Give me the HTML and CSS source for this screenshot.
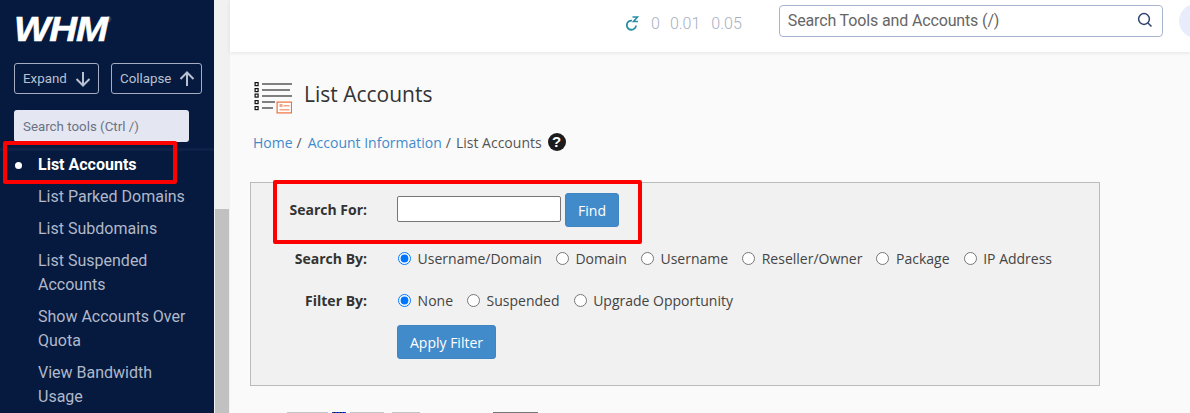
FILE: index.html
```html
<!DOCTYPE html>
<html lang="en">
<head>
<meta charset="utf-8">
<title>List Accounts</title>
<link rel="stylesheet" href="styles.css">
</head>
<body>
<div class="app">
  <aside class="sidebar">
    <div class="logo"><span class="logo-text">WHM</span><span class="logo-reg">®</span></div>
    <div class="tree-btns">
      <button class="tree-btn tree-expand">Expand
        <svg width="16" height="16" viewBox="0 0 16 16"><path d="M8 1V14.5M1.5 8L8 14.5L14.5 8" fill="none" stroke="currentColor" stroke-width="2"/></svg>
      </button>
      <button class="tree-btn tree-collapse">Collapse
        <svg width="16" height="16" viewBox="0 0 16 16"><path d="M8 15V1.5M1.5 8L8 1.5L14.5 8" fill="none" stroke="currentColor" stroke-width="2"/></svg>
      </button>
    </div>
    <input class="tool-search" type="text" placeholder="Search tools (Ctrl /)">
    <ul class="nav">
      <li class="nav-item active">List Accounts</li>
      <li class="nav-item">List Parked Domains</li>
      <li class="nav-item">List Subdomains</li>
      <li class="nav-item">List Suspended Accounts</li>
      <li class="nav-item">Show Accounts Over Quota</li>
      <li class="nav-item">View Bandwidth Usage</li>
    </ul>
  </aside>
  <div class="scroll-track"><div class="scroll-thumb"></div></div>
  <div class="main">
    <header class="topbar">
      <svg class="sleep-icon" width="14" height="16" viewBox="0 0 14 16"><path d="M7 4.6A4.6 4.6 0 1 0 11 9.5" fill="none" stroke="#2a8ea3" stroke-width="1.8"/><path d="M7.5 1H12.5L8.5 5.5H13" fill="none" stroke="#2a8ea3" stroke-width="1.6"/></svg>
      <span class="load l1">0</span><span class="load l2">0.01</span><span class="load l3">0.05</span>
      <div class="global-search">
        <input class="global-input" type="text" placeholder="Search Tools and Accounts (/)">
        <svg class="global-icon" width="16" height="16" viewBox="0 0 16 16"><circle cx="7" cy="7" r="5.4" fill="none" stroke="#2f4270" stroke-width="1.5"/><path d="M11 11L14.5 14.5" stroke="#2f4270" stroke-width="1.5"/></svg>
      </div>
      <div class="avatar"></div>
    </header>
    <main class="content">
      <div class="title-row">
        <svg class="title-icon" width="38" height="36" viewBox="0 0 38 36">
          <g fill="none" stroke="#111" stroke-width="1.2"><rect x="1.1" y="0.6" width="3" height="3"/><rect x="1.1" y="6.6" width="3" height="3"/><rect x="1.1" y="12.1" width="3" height="3"/><rect x="1.1" y="18.6" width="3" height="3"/><rect x="1.1" y="24.6" width="3" height="3"/></g>
          <g fill="#808080"><rect x="8" y="1" width="30" height="2"/><rect x="8" y="7" width="28" height="2"/><rect x="8" y="13" width="31" height="2"/><rect x="8" y="19" width="13" height="2"/><rect x="8" y="25" width="11" height="2"/></g>
          <rect x="23.1" y="20.1" width="14.4" height="10.8" fill="#fff" stroke="#f0703c" stroke-width="1.2"/>
          <g fill="#f5a582"><rect x="25.5" y="22" width="3" height="3"/><rect x="29.5" y="23" width="6" height="1.5"/><rect x="25.5" y="27" width="10" height="1.5"/></g>
        </svg>
        <h1 class="title">List Accounts</h1>
      </div>
      <nav class="crumbs">
        <a class="crumb-link">Home</a><span class="crumb-sep">/</span>
        <a class="crumb-link">Account Information</a><span class="crumb-sep">/</span>
        <span class="crumb-current">List Accounts</span>
        <span class="help">?</span>
      </nav>
      <section class="panel">
        <div class="row row-search">
          <label class="row-label">Search For:</label>
          <input class="find-input" type="text">
          <button class="btn find-btn">Find</button>
        </div>
        <div class="row row-by">
          <span class="row-label">Search By:</span>
          <label class="opt"><input type="radio" name="by" checked>Username/Domain</label>
          <label class="opt"><input type="radio" name="by">Domain</label>
          <label class="opt"><input type="radio" name="by">Username</label>
          <label class="opt"><input type="radio" name="by">Reseller/Owner</label>
          <label class="opt"><input type="radio" name="by">Package</label>
          <label class="opt"><input type="radio" name="by">IP Address</label>
        </div>
        <div class="row row-filter">
          <span class="row-label">Filter By:</span>
          <label class="opt"><input type="radio" name="filter" checked>None</label>
          <label class="opt"><input type="radio" name="filter">Suspended</label>
          <label class="opt"><input type="radio" name="filter">Upgrade Opportunity</label>
        </div>
        <div class="row row-apply">
          <button class="btn apply-btn">Apply Filter</button>
        </div>
      </section>
      <div class="pager">
        <span class="pg pg-a"></span><span class="pg pg-blue"></span><span class="pg pg-b"></span><span class="pg pg-c"></span><span class="pg pg-d"></span>
      </div>
    </main>
  </div>
</div>
<div class="mark mark-nav"></div>
<div class="mark mark-search"></div>
</body>
</html>
```

FILE: styles.css
```css
* { box-sizing: border-box; }
html, body { margin: 0; height: 413px; overflow: hidden; }
body { font-family: "Open Sans", sans-serif; font-size: 14px; color: #333; background: #fafafa; position: relative; }
.app { display: grid; grid-template-columns: 214px 16px 1fr; height: 413px; overflow: hidden; }

/* sidebar */
.sidebar { background: #051a3e; font-family: Roboto, sans-serif; overflow: hidden; padding-top: 14px; }
.logo { display: flex; height: 28px; margin-left: 14px; color: #fff; align-items: flex-start; }
.logo-text { font-family: "Liberation Sans", sans-serif; font-weight: 700; font-style: italic; font-size: 35px; line-height: 30px; width: 92px; display: block; transform: scaleX(1.1); transform-origin: left center; letter-spacing: -1px; -webkit-text-stroke: .6px #fff; }
.logo-reg { font-family: "Liberation Sans", sans-serif; font-size: 7px; line-height: 8px; color: #8e98ad; margin-left: 0; margin-top: 2px; }
.tree-btns { display: flex; gap: 12px; margin: 21px 0 0 14px; }
.tree-btn { display: flex; align-items: center; justify-content: space-between; height: 31px; padding: 0 6px 0 8px; background: transparent; border: 1px solid #a5adc2; border-radius: 3px; color: #b9c0d1; font-family: Roboto, sans-serif; font-size: 13.33px; }
.tree-expand { width: 85px; padding-right: 7px; }
.tree-collapse { width: 91px; }
.tool-search { display: block; width: 175px; height: 32px; margin: 16px 0 0 14px; padding: 0 9px; background: #e4e7f1; border: 0; border-radius: 3px; font-family: Roboto, sans-serif; font-size: 13.33px; }
.tool-search::placeholder { color: #6b7285; opacity: 1; }
.nav { list-style: none; margin: 6px 0 0; padding: 0; border-top: 3px solid #0e2249; }
.nav-item { padding: 2px 24px 4px 38px; line-height: 24px; font-size: 16px; color: #b1b8ca; position: relative; }
.nav-item + .nav-item { padding-top: 4px; padding-bottom: 4px; }
.active { color: #fff; font-weight: 700; }
.active::before { content: ""; position: absolute; left: 15px; top: 11px; width: 7px; height: 7px; border-radius: 50%; background: #fff; }

/* scrollbar */
.scroll-track { background: #f1f1f1; padding: 209px 1px 0; }
.scroll-thumb { height: 100%; background: #c1c1c1; }

/* main */
.main { min-width: 0; display: flex; flex-direction: column; }
.topbar { height: 52px; flex: none; background: #fff; box-shadow: 0 1px 4px rgba(0, 0, 0, .09); display: flex; align-items: flex-start; padding: 5px 0 0 395px; font-family: Roboto, sans-serif; position: relative; }
.sleep-icon { margin-top: 11px; margin-right: 12px; flex: none; }
.load { font-weight: 300; font-size: 16px; color: #a9afc2; line-height: 20px; margin-top: 9px; }
.l1 { margin-left: 0; }
.l2 { margin-left: 10px; }
.l3 { margin-left: 11px; }
.global-search { width: 384px; height: 32px; margin-left: 37px; border: 1px solid #a9b4cf; border-radius: 4px; display: flex; align-items: center; padding: 0 9px 0 8px; flex: none; }
.global-input { flex: 1; min-width: 0; border: 0; padding: 0; margin-bottom: 2px; outline: 0; font-family: Roboto, sans-serif; font-size: 16px; letter-spacing: -.14px; background: transparent; }
.global-input::placeholder { color: #666; opacity: 1; }
.global-icon { margin-bottom: 2px; }
.avatar { width: 34px; height: 34px; border-radius: 50%; background: #e9ecfa; margin-left: 16px; margin-top: -1px; flex: none; }

.content { padding: 30px 0 0 20px; flex: 1; overflow: hidden; }
.title-row { display: flex; align-items: center; height: 36px; padding-left: 4px; }
.title-icon { flex: none; }
.title { font-size: 21px; font-weight: 400; line-height: 30px; margin: 0 0 12px 12px; color: #333; }
.crumbs { display: flex; align-items: center; margin: 12px 0 0 3px; height: 24px; }
.crumb-link { color: #428bca; }
.crumb-sep { margin: 0 6px 0 4px; color: #555; }
.crumb-current { color: #555; margin-left: -1px; }
.help { display: block; width: 18px; height: 18px; margin-left: 6px; border-radius: 50%; background: #1c1c1c; color: #fff; font-family: "Liberation Sans", sans-serif; font-weight: 700; font-size: 15px; line-height: 18px; text-align: center; }

.panel { width: 850px; height: 204px; margin-top: 28px; background: #f1f1f1; border: 1px solid #bbb; display: flex; flex-direction: column; }
.row { display: flex; align-items: center; }
.row-label { width: 116px; margin-right: 30px; text-align: right; font-weight: 700; color: #333; flex: none; }
.row-search { margin-top: 10px; height: 34px; }
.row-search .row-label { margin-bottom: 2px; }
.row-by { margin-top: 21px; height: 20px; }
.row-filter { margin-top: 22px; height: 20px; }
.row-apply { margin-top: 15px; padding-left: 146px; }
.find-input { width: 164px; height: 26px; border: 1px solid #767676; border-radius: 2px; background: #fff; margin: 0 4px 2px 0; padding: 0; }
.btn { background: #428bca; border: 1px solid #3f85c2; border-radius: 3px; color: #fff; font-family: "Open Sans", sans-serif; font-size: 14px; height: 34px; padding: 0; }
.find-btn { width: 54px; }
.apply-btn { width: 99px; }
.opt { display: flex; align-items: center; margin-right: 13px; color: #444; white-space: nowrap; }
.opt input { width: 13px; height: 13px; margin: 0 6.6px 0 1px; flex: none; }

.pager { display: flex; margin: 26px 0 0 37px; height: 2px; }
.pg { display: block; height: 2px; background: #c4c4c4; flex: none; }
.pg-a { width: 41px; }
.pg-blue { width: 14px; margin-left: 4px; background: repeating-linear-gradient(90deg, #0a3fd0 0 2px, #111 2px 3px); }
.pg-b { width: 34px; margin-left: 4px; }
.pg-c { width: 28px; margin-left: 8px; }
.pg-d { width: 45px; margin-left: 73px; background: #767676; }

/* annotation marks */
.mark { position: absolute; border: 4px solid #fe0000; border-radius: 2px; }
.mark-nav { left: 3px; top: 141px; width: 174px; height: 43px; }
.mark-search { left: 273px; top: 180px; width: 369px; height: 64px; }
```
